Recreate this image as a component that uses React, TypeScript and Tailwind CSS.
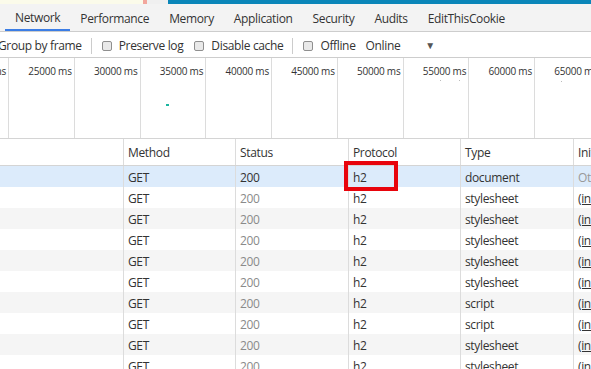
const tabs = ["Network", "Performance", "Memory", "Application", "Security", "Audits", "EditThisCookie"]

const ticks = ["25000 ms", "30000 ms", "35000 ms", "40000 ms", "45000 ms", "50000 ms", "55000 ms", "60000 ms", "65000 ms"]

const rows = [
  { type: "document", init: "Ot", selected: true },
  { type: "stylesheet", init: "(in" },
  { type: "stylesheet", init: "(in" },
  { type: "stylesheet", init: "(in" },
  { type: "stylesheet", init: "(in" },
  { type: "stylesheet", init: "(in" },
  { type: "script", init: "(in" },
  { type: "script", init: "(in" },
  { type: "stylesheet", init: "(in" },
  { type: "stylesheet", init: "(in" },
]

function Checkbox() {
  return <span className="inline-block w-[10px] h-[10px] rounded-[2px] border border-[#8f8f8f] bg-[#e9e9e9]" />
}

const cols = "grid grid-cols-[123px_112px_113px_112px_113px_1fr]"
const cell = "border-l border-[#dcdcdc] pl-[4px] pt-[2px] flex items-center whitespace-nowrap overflow-hidden"

export default function App() {
  return (
    <div className="w-[591px] h-[369px] overflow-hidden bg-white text-[12px] tracking-[-0.35px] text-[#333] font-['Open_Sans','Noto_Sans',sans-serif] relative">
      {/* window strip */}
      <div className="flex h-[4px]">
        <div className="w-[143px] bg-[#fbfbea]" />
        <div className="w-[4px] bg-[#f2a69c]" />
        <div className="w-[21px] bg-[#f0f0f0]" />
        <div className="flex-1 bg-[#0a86b9]" />
      </div>

      {/* tabs */}
      <div className="flex h-[28px] bg-[#f3f3f3] border-b border-[#cdcdcd] pl-[5px]">
        {tabs.map((t, i) => (
          <div
            key={t}
            className={`px-[10px] pt-[2px] flex items-center ${i === 0 ? "border-b-2 border-[#3b7de5]" : ""}`}
          >
            {t}
          </div>
        ))}
      </div>

      {/* toolbar */}
      <div className="flex items-center h-[26px] pt-[2px] border-b border-[#cdcdcd]">
        <span className="ml-[-2px]">Group by frame</span>
        <span className="ml-[9px] w-px h-[16px] bg-[#ccc]" />
        <span className="ml-[10px] flex items-center">
          <Checkbox />
        </span>
        <span className="ml-[7px]">Preserve log</span>
        <span className="ml-[11px] flex items-center">
          <Checkbox />
        </span>
        <span className="ml-[7px]">Disable cache</span>
        <span className="ml-[9px] w-px h-[16px] bg-[#ccc]" />
        <span className="ml-[10px] flex items-center">
          <Checkbox />
        </span>
        <span className="ml-[7px]">Offline</span>
        <span className="ml-[10px]">Online</span>
        <span className="ml-[25px] text-[10px] text-[#555]">▼</span>
      </div>

      {/* overview timeline */}
      <div className="flex h-[81px] border-b border-[#d4d4d4] relative">
        <div className="w-[9px] shrink-0 border-r border-[#dcdcdc] overflow-hidden flex justify-end">
          <span className="pt-[6px] pr-[2px] text-[10px] tracking-[-0.2px] whitespace-nowrap">ms</span>
        </div>
        {ticks.map((t) => (
          <div key={t} className="w-[65.75px] shrink-0 border-r border-[#dcdcdc] flex justify-end">
            <span className="pt-[6px] pr-[2px] text-[10px] tracking-[-0.2px] whitespace-nowrap">{t}</span>
          </div>
        ))}
        <span className="absolute left-[166px] top-[46px] w-[3px] h-[2px] bg-[#1bb5a0]" />
        <span className="absolute left-[440px] top-[22px] w-px h-px bg-[#bbb]" />
        <span className="absolute left-[459px] top-[22px] w-px h-px bg-[#bbb]" />
        <span className="absolute left-[561px] top-[23px] w-px h-px bg-[#bbb]" />
      </div>

      {/* request table */}
      <div className="relative">
        <div className={`${cols} h-[27px] border-b border-[#d4d4d4]`}>
          <div />
          {["Method", "Status", "Protocol", "Type", "Initiator"].map((h) => (
            <div key={h} className={cell}>
              {h}
            </div>
          ))}
        </div>
        {rows.map((r, i) => (
          <div
            key={i}
            className={`${cols} h-[21px] ${r.selected ? "bg-[#dcebfb]" : i % 2 === 0 ? "bg-[#f5f5f5]" : "bg-white"}`}
          >
            <div />
            <div className={cell}>GET</div>
            <div className={`${cell} ${r.selected ? "text-[#333]" : "text-[#8a8a8a]"}`}>200</div>
            <div className={cell}>h2</div>
            <div className={cell}>{r.type}</div>
            <div className={cell}>
              {r.selected ? <span className="text-[#999]">Other</span> : <span className="underline">(index)</span>}
            </div>
          </div>
        ))}
        <div className="absolute left-[344px] top-[22px] w-[54px] h-[30px] border-4 border-[#e8040c]" />
      </div>
    </div>
  )
}
